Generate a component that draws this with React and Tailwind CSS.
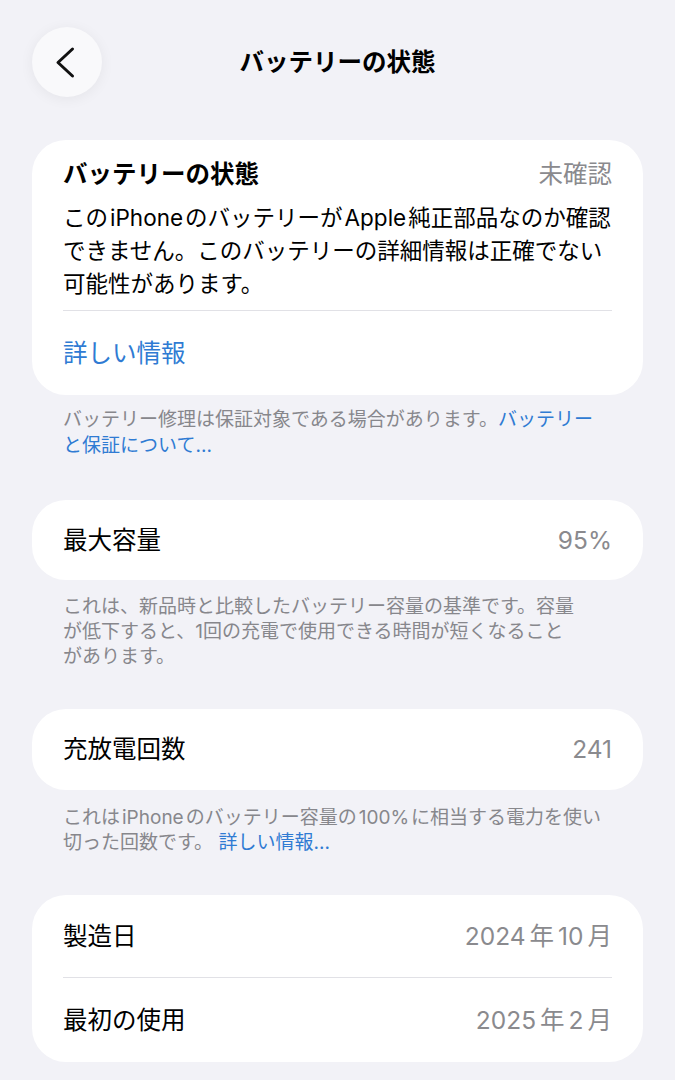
const font = {
  fontFamily: '"Inter", "Noto Sans CJK JP", "Noto Sans", sans-serif',
};

// latin words inside japanese text get a little breathing room
function L({ children }) {
  return <span className="mx-[2px]">{children}</span>;
}

function Card({ children, className = "" }) {
  return (
    <div className={`bg-white rounded-[34px] px-[31px] ${className}`}>
      {children}
    </div>
  );
}

function Row({ label, value, className = "" }) {
  return (
    <div className={`flex items-center justify-between ${className}`}>
      <span className="text-[24.5px] text-black">{label}</span>
      <span className="text-[24.5px] text-[#8a8a8e]">{value}</span>
    </div>
  );
}

function YearMonth({ y, m }) {
  return (
    <>
      {y}
      <span className="mx-[4px]">年</span>
      {m}
      <span className="ml-[4px]">月</span>
    </>
  );
}

function Footer({ children, className = "" }) {
  return (
    <p className={`px-[31px] text-[19px] text-[#87878c] ${className}`}>
      {children}
    </p>
  );
}

export default function App() {
  return (
    <div
      className="min-h-[1080px] w-full bg-[#f2f2f7] px-[32px] pb-10"
      style={font}
    >
      {/* nav bar */}
      <div className="grid grid-cols-[1fr_auto_1fr] items-center pt-[27px]">
        <button className="w-[70px] h-[70px] rounded-full bg-[#f9f9fb] shadow-[0_2px_14px_rgba(0,0,0,0.06)]">
          <svg viewBox="0 0 70 70" width="70" height="70" fill="none">
            <path
              d="M40.5 22 L26 35.5 L40.5 49"
              stroke="#111"
              strokeWidth="3"
              strokeLinecap="round"
              strokeLinejoin="round"
            />
          </svg>
        </button>
        <h1 className="text-[24.5px] font-bold text-black">
          バッテリーの状態
        </h1>
        <div />
      </div>

      {/* health */}
      <Card className="mt-[43px] pt-[17px]">
        <div className="flex items-center justify-between h-[34px]">
          <h2 className="text-[24.5px] font-bold text-black">バッテリーの状態</h2>
          <span className="text-[24.5px] text-[#8a8a8e]">未確認</span>
        </div>
        <p className="mt-[10px] text-[22.5px] leading-[33px] text-black">
          この<L>iPhone</L>のバッテリーが<L>Apple</L>純正部品なのか確認
          <br />
          できません。このバッテリーの詳細情報は正確でない
          <br />
          可能性があります。
        </p>
        <div className="mt-[10px] h-px bg-[#e1e1e6]" />
        <div className="h-[84px] flex items-center">
          <a className="text-[24.5px] text-[#2f7bd3]">詳しい情報</a>
        </div>
      </Card>
      <Footer className="mt-[12px] leading-[26px]">
        バッテリー修理は保証対象である場合があります。
        <span className="text-[#2f7bd3]">バッテリー</span>
        <br />
        <span className="text-[#2f7bd3]">と保証について...</span>
      </Footer>

      {/* capacity */}
      <Card className="mt-[41px]">
        <Row label="最大容量" value="95%" className="h-[80px]" />
      </Card>
      <Footer className="mt-[14px] leading-[25px]">
        これは、新品時と比較したバッテリー容量の基準です。容量
        <br />
        が低下すると、1回の充電で使用できる時間が短くなること
        <br />
        があります。
      </Footer>

      {/* cycle count */}
      <Card className="mt-[40px]">
        <Row label="充放電回数" value="241" className="h-[81px]" />
      </Card>
      <Footer className="mt-[15px] leading-[25px]">
        これは<L>iPhone</L>のバッテリー容量の<L>100%</L>に相当する電力を使い
        <br />
        切った回数です。 <span className="text-[#2f7bd3]">詳しい情報...</span>
      </Footer>

      {/* dates */}
      <Card className="mt-[40px]">
        <Row
          label="製造日"
          value={<YearMonth y="2024" m="10" />}
          className="h-[82px]"
        />
        <div className="h-px bg-[#e1e1e6]" />
        <Row
          label="最初の使用"
          value={<YearMonth y="2025" m="2" />}
          className="h-[84px]"
        />
      </Card>
    </div>
  );
}
